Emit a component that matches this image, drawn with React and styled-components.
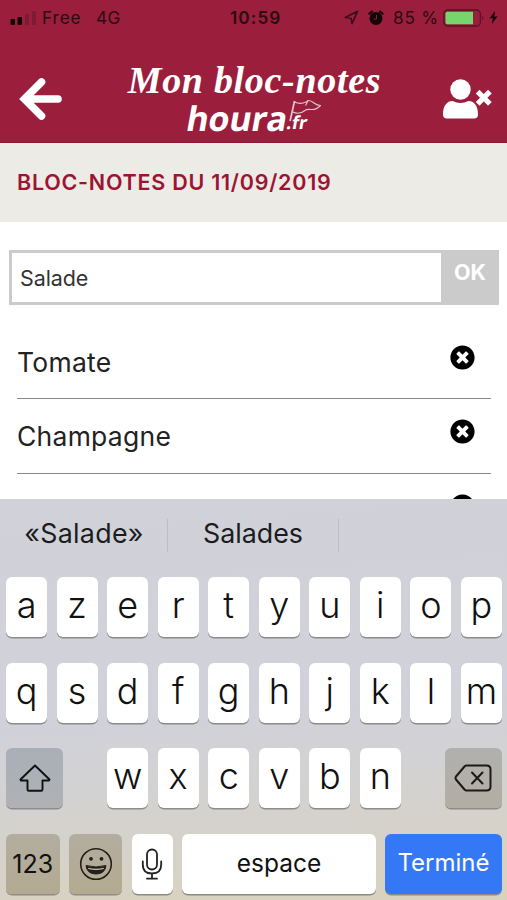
import React, { useState } from 'react';
import styled, { createGlobalStyle } from 'styled-components';
import { FaTimesCircle } from 'react-icons/fa';

const GlobalStyle = createGlobalStyle`
  * {
    box-sizing: border-box;
  }
  body {
    margin: 0;
    background: #fff;
    font-family: Inter, "Liberation Sans", sans-serif;
  }
  button, input {
    font-family: inherit;
    border: 0;
    padding: 0;
    margin: 0;
    outline: 0;
  }
`;

const Phone = styled.div`
  display: flex;
  flex-direction: column;
  width: 507px;
  height: 900px;
  overflow: hidden;
`;

const Header = styled.header`
  flex: none;
  height: 143px;
  background: #9b1f3d;
  border-bottom: 1px solid #8b1a35;
`;

const StatusBar = styled.div`
  display: grid;
  grid-template-columns: 230px 1fr 163px;
  align-items: center;
  height: 35px;
  color: #2b0a12;
  font-size: 17.2px;
`;

const StatusGroup = styled.div`
  display: flex;
  align-items: center;
  height: 35px;
  svg {
    flex: none;
  }
`;

const StatusText = styled.span`
  width: ${p => p.$w}px;
  margin-left: ${p => p.$ml || 0}px;
  letter-spacing: ${p => p.$ls || 0}px;
  font-weight: ${p => p.$bold ? 600 : 400};
  line-height: 20px;
  white-space: nowrap;
`;

const NavBar = styled.div`
  display: flex;
  justify-content: space-between;
  height: 106px;
  padding: 25px 14px 0 18px;
`;

const NavButton = styled.button`
  display: block;
  height: 80px;
  background: none;
  svg {
    display: block;
  }
`;

const Logo = styled.div`
  display: flex;
  flex-direction: column;
  align-items: center;
  width: 262px;
  color: #fff;
`;

const LogoScript = styled.div`
  height: 38px;
  margin-left: 4px;
  font: italic bold 38px/40px "Liberation Serif", serif;
  letter-spacing: 0.7px;
  white-space: nowrap;
`;

const LogoBrand = styled.div`
  display: flex;
  align-items: flex-end;
  height: 40px;
  margin-left: -10px;
  font: bold 34px/40px "Open Sans", sans-serif;
  letter-spacing: -0.2px;
  transform: skewX(-10deg);
`;

const LogoSuffix = styled.span`
  position: relative;
  font-size: 18px;
  line-height: 32px;
  letter-spacing: 0;
  svg {
    position: absolute;
    left: 0;
    top: -7px;
    transform: skewX(10deg);
  }
`;

const TitleStrip = styled.div`
  flex: none;
  height: 79px;
  padding: 26px 17px;
  background: #ecebe6;
  color: #9b1532;
  font-size: 21.5px;
  font-weight: 600;
  line-height: 27px;
  letter-spacing: 0.75px;
`;

const Form = styled.form`
  flex: none;
  display: flex;
  height: 55px;
  margin: 28px 8px 0 9px;
  border: 3px solid #cbcbcb;
  background: #cbcbcb;
`;

const Field = styled.input`
  width: 429px;
  padding: 1px 0 0 8px;
  background: #fff;
  color: #333;
  font-size: 21.5px;
  letter-spacing: -0.1px;
`;

const OkButton = styled.button`
  flex: 1;
  padding: 0 0 12px 3px;
  background: #cbcbcb;
  color: #fff;
  font-size: 21.5px;
  font-weight: 700;
`;

const List = styled.ul`
  flex: 1;
  min-height: 0;
  overflow: hidden;
  margin: 0;
  padding: 20px 16px 0 17px;
  list-style: none;
`;

const Item = styled.li`
  display: flex;
  justify-content: space-between;
  height: 74.3px;
  padding: 19px 16px 0 0;
  border-bottom: 1.5px solid #8a8a8a;
  color: #222;
  font-size: 26.5px;
  line-height: 36px;
  letter-spacing: 0.25px;
`;

const RemoveButton = styled.button`
  width: 25px;
  height: 25px;
  margin-top: 1px;
  background: none;
  color: #000;
  svg {
    display: block;
  }
`;

const Keyboard = styled.section`
  flex: none;
  height: 401px;
  padding: 0 5px 0 6px;
  background: linear-gradient(176deg, #d1d2d8 0%, #d0d1da 50%, #d3d2d3 68%, #d6d2c7 86%, #d9d2bd 100%);
`;

const Suggestions = styled.div`
  display: flex;
  align-items: center;
  height: 78px;
  padding-bottom: 5px;
`;

const Suggestion = styled.div`
  width: ${p => p.$w}px;
  height: 33px;
  padding-right: ${p => p.$pr || 0}px;
  border-right: ${p => p.$last ? 0 : '1px solid #bcbdc5'};
  color: #1c1c1f;
  font-size: 26.8px;
  line-height: 29px;
  letter-spacing: ${p => p.$ls || 0}px;
  text-align: center;
`;

const KeyRow = styled.div`
  display: flex;
  justify-content: space-between;
  height: 60px;
  margin-bottom: 25.6px;
`;

const KeyGroup = styled.div`
  display: flex;
  gap: 9.4px;
`;

const keyColors = {
  light: '#fff',
  shift: 'linear-gradient(#a9afb9, #b0b1b3)',
  erase: 'linear-gradient(#b0b0b0, #b3aea2)',
  dark: 'linear-gradient(#b2ada0, #b4aa91)',
  blue: '#3478f6',
};

const Key = styled.button`
  display: flex;
  align-items: center;
  justify-content: center;
  width: ${p => p.$w || 41.2}px;
  height: 60px;
  padding-bottom: ${p => p.$pb ?? 4}px;
  border-radius: 6px;
  background: ${p => keyColors[p.$tone || 'light']};
  box-shadow: 0 1.5px 0 rgba(70, 70, 70, 0.5);
  color: ${p => p.$tone === 'blue' ? '#fff' : '#111'};
  font-size: ${p => p.$size || 36}px;
  font-weight: ${p => p.$size ? 400 : 300};
  letter-spacing: ${p => p.$ls || 0}px;
`;

const SignalIcon = () => (
  <svg width="27" height="16" viewBox="0 0 27 16">
    <rect x="0.5" y="9" width="4.5" height="6" rx="1" fill="#12040a" />
    <rect x="7.5" y="7" width="4.5" height="8" rx="1" fill="#12040a" />
    <rect x="15" y="4" width="4" height="11" rx="1" fill="#7d1a34" />
    <rect x="22" y="1" width="4" height="14" rx="1" fill="#7d1a34" />
  </svg>
);

const LocationIcon = () => (
  <svg width="15" height="15" viewBox="0 0 15 15">
    <path d="M1.3 7.5 13.5 1.3 8 13.6 7 8.2Z" fill="none" stroke="#3a0d19" strokeWidth="1.6" strokeLinejoin="round" />
  </svg>
);

const AlarmIcon = () => (
  <svg width="16" height="16" viewBox="0 0 16 16">
    <circle cx="8" cy="8.5" r="6.5" fill="#150409" />
    <path d="M1.500 3.700 4 1.600M14.500 3.700 12 1.600" stroke="#150409" strokeWidth="2.200" strokeLinecap="round" />
    <path d="M8.500 5V9H5.500" fill="none" stroke="#8b1c37" strokeWidth="1" />
  </svg>
);

const BatteryIcon = () => (
  <svg width="43" height="18" viewBox="0 0 43 18">
    <rect x="0.8" y="1" width="36.6" height="16" rx="4" fill="none" stroke="#5b1224" strokeWidth="1.3" />
    <path d="M2.500 4.500Q2.500 2.700 4.300 2.700H30V15.300H4.300Q2.500 15.300 2.500 13.500Z" fill="#76d66c" />
    <path d="M39.300 6.500q2.300 2.500 0 5Z" fill="#5b1224" />
  </svg>
);

const BoltIcon = () => (
  <svg width="9" height="15" viewBox="0 0 9 15">
    <path d="M6.200.8.500 8.200h3.300L2.800 14 8.500 6.500H5.200Z" fill="#1c050b" />
  </svg>
);

const BackIcon = () => (
  <svg width="46" height="80" viewBox="0 0 46 80">
    <path d="M23.500 22 6.500 39 23.500 56M7.500 39H40" fill="none" stroke="#fff" strokeWidth="7.6" strokeLinecap="round" />
  </svg>
);

const UserIcon = () => (
  <svg width="52" height="80" viewBox="0 0 52 80">
    <circle cx="19.5" cy="29.5" r="10.2" fill="#fff" />
    <path d="M2 54.500C2 45.500 6 41 11.500 41q8 4 16 0C33 41 37 45.500 37 54.500Q37 58.500 33 58.500H6Q2 58.500 2 54.500Z" fill="#fff" />
    <path d="m38.500 33.500 8.500 8.500m0-8.500-8.500 8.500" stroke="#fff" strokeWidth="5.3" strokeLinecap="square" />
  </svg>
);

const FlagIcon = () => (
  <svg width="34" height="26" viewBox="0 0 34 26" fill="none" stroke="#fff" strokeOpacity="0.75" strokeLinejoin="round">
    <path d="M1 22 5.500 2" strokeWidth="1.700" />
    <path d="M5.500 3Q10 5 14 4T19 1.500Q22 1.500 25 4T31.500 6.500Q27 11 22 10.500T16 11.500Q10 16 3.800 13M19 1.500 16.500 6.500" strokeWidth="1.100" />
  </svg>
);

const ShiftIcon = () => (
  <svg width="32" height="28" viewBox="0 0 32 28">
    <path d="M16 1.500 30.500 15.500Q30.500 16.500 29.500 16.500H23.500V25.500Q23.500 26.800 22.200 26.800H9.800Q8.500 26.800 8.500 25.500V16.500H2.500Q1.500 16.500 1.500 15.500Z" fill="none" stroke="#111" strokeWidth="1.900" strokeLinejoin="round" />
  </svg>
);

const EraseIcon = () => (
  <svg width="38" height="28" viewBox="0 0 38 28" fill="none" stroke="#1a1a18" strokeWidth="2" strokeLinejoin="round" strokeLinecap="round">
    <path d="M12.500 1.500H32.500Q36.500 1.500 36.500 5.500V22.500Q36.500 26.500 32.500 26.500H12.500Q11.500 26.500 10.500 25.500L2 15.500Q1 14 2 12.500L10.500 2.500Q11.500 1.500 12.500 1.500Z" />
    <path d="m18 8.500 10.500 11m0-11-10.500 11" />
  </svg>
);

const SmileIcon = () => (
  <svg width="34" height="34" viewBox="0 0 34 34">
    <circle cx="17" cy="17" r="15.3" fill="none" stroke="#222019" strokeWidth="1.6" />
    <circle cx="12" cy="11.8" r="1.9" fill="#222019" />
    <circle cx="22.500" cy="11.8" r="1.9" fill="#222019" />
    <path d="M7 18.500Q17 21.500 27 18.500Q26 27 17 27T7 18.500Z" fill="#222019" stroke="#222019" strokeWidth="1" />
    <path d="M9 20.700Q17 22.700 25 20.700L24.500 22Q17 24 9.500 22Z" fill="#c9c3b2" />
  </svg>
);

const MicIcon = () => (
  <svg width="22" height="34" viewBox="0 0 22 34" fill="none" stroke="#222" strokeWidth="1.8" strokeLinecap="round">
    <rect x="6" y="2.5" width="10" height="20" rx="5" />
    <path d="M1.800 14.500V17.500Q1.800 26.500 11 26.500T20.200 17.500V14.500M11 26.500V31.700M6 31.700H16" />
  </svg>
);

const Letters = ({ keys }) => keys.split('').map(k => <Key type="button" key={k}>{k}</Key>);

const App = () => {
  const [note, setNote] = useState('Salade');
  const [items, setItems] = useState(['Tomate', 'Champagne', '']);

  const addNote = e => {
    e.preventDefault();
    if (note) {
      setItems([note, ...items]);
      setNote('');
    }
  };

  return <Phone>
    <GlobalStyle />
    <Header>
      <StatusBar>
        <StatusGroup>
          <StatusText $w={10} />
          <SignalIcon />
          <StatusText $w={48} $ml={5} $ls={0.9}>Free</StatusText>
          <StatusText $w={40} $ml={6} $ls={0.4}>4G</StatusText>
        </StatusGroup>
        <StatusText $bold $w={60} $ls={1.1}>10:59</StatusText>
        <StatusGroup>
          <LocationIcon />
          <StatusText $w={9} />
          <AlarmIcon />
          <StatusText $w={50} $ml={9} $ls={0.8}>85 %</StatusText>
          <BatteryIcon />
          <StatusText $w={3} />
          <BoltIcon />
        </StatusGroup>
      </StatusBar>
      <NavBar>
        <NavButton aria-label="Retour"><BackIcon /></NavButton>
        <Logo>
          <LogoScript>Mon bloc-notes</LogoScript>
          <LogoBrand>houra<LogoSuffix>.fr<FlagIcon /></LogoSuffix></LogoBrand>
        </Logo>
        <NavButton aria-label="Déconnexion"><UserIcon /></NavButton>
      </NavBar>
    </Header>

    <TitleStrip>BLOC-NOTES DU 11/09/2019</TitleStrip>

    <Form onSubmit={addNote}>
      <Field value={note} onChange={e => setNote(e.target.value)} />
      <OkButton>OK</OkButton>
    </Form>

    <List>
      {items.map((item, i) => (
        <Item key={i}>
          {item || <span />}
          <RemoveButton onClick={() => setItems(items.filter((_, n) => n !== i))}>
            <FaTimesCircle size={25} />
          </RemoveButton>
        </Item>
      ))}
    </List>

    <Keyboard>
      <Suggestions>
        <Suggestion $w={162} $pr={5} $ls={0.3}>«Salade»</Suggestion>
        <Suggestion $w={171}>Salades</Suggestion>
        <Suggestion $w={160} $last />
      </Suggestions>
      <KeyRow><Letters keys="azertyuiop" /></KeyRow>
      <KeyRow><Letters keys="qsdfghjklm" /></KeyRow>
      <KeyRow>
        <Key type="button" $tone="shift" $w={57} $pb={0}><ShiftIcon /></Key>
        <KeyGroup><Letters keys="wxcvbn" /></KeyGroup>
        <Key type="button" $tone="erase" $w={57} $pb={0}><EraseIcon /></Key>
      </KeyRow>
      <KeyRow>
        <Key type="button" $tone="dark" $w={53.5} $size={25} $pb={0}>123</Key>
        <Key type="button" $tone="dark" $w={53.5} $pb={0}><SmileIcon /></Key>
        <Key type="button" $pb={0}><MicIcon /></Key>
        <Key type="button" $w={193.5} $size={24.5} $pb={2}>espace</Key>
        <Key type="button" $tone="blue" $w={117} $size={24} $pb={2}>Terminé</Key>
      </KeyRow>
    </Keyboard>
  </Phone>;
};

export default App;
